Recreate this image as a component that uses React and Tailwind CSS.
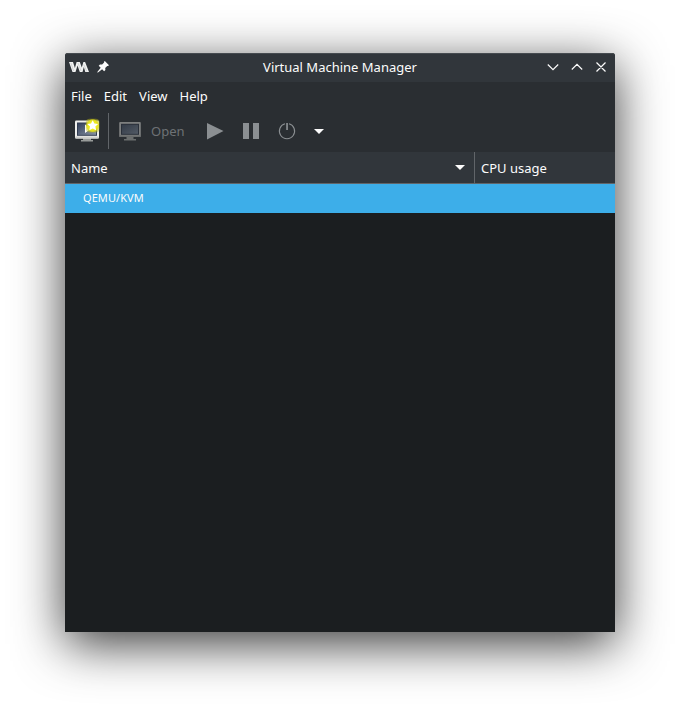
import React from "react";

function Monitor() {
  return (
    <svg width="26" height="27" viewBox="0 0 26 27" className="block">
      <defs>
        <linearGradient id="offScreen" x1="0" y1="0" x2="1" y2="1">
          <stop offset="0" stopColor="#333b47" />
          <stop offset="1" stopColor="#525a65" />
        </linearGradient>
      </defs>
      <path d="M9.500 21h7v2h2.500v1.500H7V23h2.500z" fill="#6b6e6e" />
      <rect x="2.200" y="6" width="21.600" height="15" rx="1" fill="#7d7f7f" />
      <rect x="2.200" y="19.600" width="21.600" height="1.400" rx="0.700" fill="#686b6b" />
      <rect x="4" y="7.800" width="18" height="11" fill="#2a303a" />
      <rect x="5" y="8.800" width="16" height="9" fill="url(#offScreen)" />
    </svg>
  );
}

function NewMachine() {
  return (
    <svg width="28" height="28" viewBox="0 0 28 28" className="block">
      <defs>
        <linearGradient id="screen" x1="0" y1="0" x2="1" y2="1">
          <stop offset="0" stopColor="#34415b" />
          <stop offset="1" stopColor="#8792a3" />
        </linearGradient>
        <radialGradient id="glow">
          <stop offset="0.6" stopColor="#f0ec1c" />
          <stop offset="0.85" stopColor="#e0dc1a" stopOpacity="0.9" />
          <stop offset="1" stopColor="#c4c016" stopOpacity="0.45" />
        </radialGradient>
      </defs>
      <path d="M10 22h8v2h2v1.500H8V24h2z" fill="#989b99" />
      <rect x="2" y="4.500" width="24" height="18" rx="1.200" fill="#eeeeec" />
      <rect x="2" y="20.500" width="24" height="2" rx="1" fill="#cfd0cd" />
      <rect x="4" y="6.500" width="20" height="13.300" fill="#303b50" />
      <rect x="5" y="7.500" width="18" height="11.300" fill="url(#screen)" />
      <path d="M12 8.500v8.500l6-4.250z" fill="#fff" />
      <rect x="12.800" y="2.800" width="13.700" height="13.700" rx="4" fill="url(#glow)" />
      <path d="M19.700 4.200l1.700 3.300 3.700.5-2.700 2.600.7 3.700-3.400-1.700-3.400 1.700.7-3.700L14.300 8l3.700-.5z" fill="#fff" />
    </svg>
  );
}

function TitleBar() {
  return (
    <div className="relative flex h-[29px] items-center rounded-t-[3px] border-t border-[#464b50] bg-[#31363b] pr-2 pb-[2px] pl-1">
      <svg width="20" height="12" viewBox="0 0 20 12" fill="#f1f2f2">
        <path d="M0 1h4l1.900 6L7.600 1h3.200l2 5.600L14.400 1h1.700L20 11h-3.700l-1.500-5L13.500 11h-2.700L8.500 4.600 6.500 11H3.500z" />
        <path d="M1.900 2l2.700 8M9 2l3 8M14.800 3.500l3 7" fill="none" stroke="#b4b7b9" strokeWidth="0.500" />
      </svg>
      <svg width="12" height="12" viewBox="0 0 12 12" className="ml-2 block" fill="#fcfcfc">
        <path d="M7.800 0l4.200 4.200-1 .8-.8-.1-2 2 .2 2.100-1.300 1.300-2-2L1 11.500l-.7.1.2-.8 3.200-4.100-2-2 1.300-1.300 2.100.2 2-2-.1-.8z" />
      </svg>
      <div className="absolute inset-x-0 top-[4px] text-center">Virtual Machine Manager</div>
      <svg width="60" height="12" viewBox="0 0 60 12" className="ml-auto block" fill="none" stroke="#fcfcfc" strokeWidth="1.200">
        <path d="M.8 3.500L6 8.700l5.200-5.200M24.800 8.500L30 3.300l5.200 5.200M49.500 1.500l9 9M58.500 1.500l-9 9" />
      </svg>
    </div>
  );
}

function Toolbar() {
  return (
    <div className="flex h-[42px] items-start bg-[#2a2e32] pt-[3px]">
      <div className="ml-2 pt-[3px]"><NewMachine /></div>
      <div className="ml-[7px] h-9 w-px bg-[#616569]" />
      <div className="ml-2 pt-[3px]"><Monitor /></div>
      <div className="ml-2 pt-[9px] text-[#6e7275]">Open</div>
      <svg width="122" height="36" viewBox="0 0 122 36" className="ml-5">
        <path d="M2 10v16.500L18.500 18z" fill="#8b8f92" />
        <path d="M38 10h6v16h-6zM48 10h6v16h-6z" fill="#8b8f92" />
        <path d="M80 10.750a7.600 7.600 0 1 0 4 0" fill="none" stroke="#8b8f92" strokeWidth="1.100" />
        <path d="M81.200 10h1.700v7h-1.700z" fill="#8b8f92" />
        <path d="M109 16h10l-5 5z" fill="#fcfcfc" />
      </svg>
    </div>
  );
}

export default function App() {
  return (
    <div className="h-[709px] w-[680px] overflow-hidden bg-white px-[65px] pt-[53px] font-['Noto_Sans',sans-serif] text-[13px] leading-[18px] text-[#fcfcfc]">
      <div className="h-[579px] rounded-t-[3px] bg-[#1b1e20] shadow-[0_12px_50px_rgba(0,0,0,0.78)]">
        <TitleBar />
        <div className="flex h-7 items-center gap-3 bg-[#2a2e32] px-1.5">
          <span>File</span>
          <span>Edit</span>
          <span>View</span>
          <span>Help</span>
        </div>
        <Toolbar />
        <div className="flex h-8 border-b border-[#616569] bg-[#31363b]">
          <div className="flex w-[410px] items-center justify-between border-r border-[#616569] pr-[9px] pl-1.5">
            <span>Name</span>
            <svg width="10" height="5" viewBox="0 0 10 5" fill="#fcfcfc"><path d="M0 0h10L5 5z" /></svg>
          </div>
          <div className="flex items-center pl-1.5">CPU usage</div>
        </div>
        <div className="flex h-[29px] items-center bg-[#3daee9] pb-[2px] pl-[18px] text-[11px] tracking-[0.08px]">QEMU/KVM</div>
      </div>
    </div>
  );
}
